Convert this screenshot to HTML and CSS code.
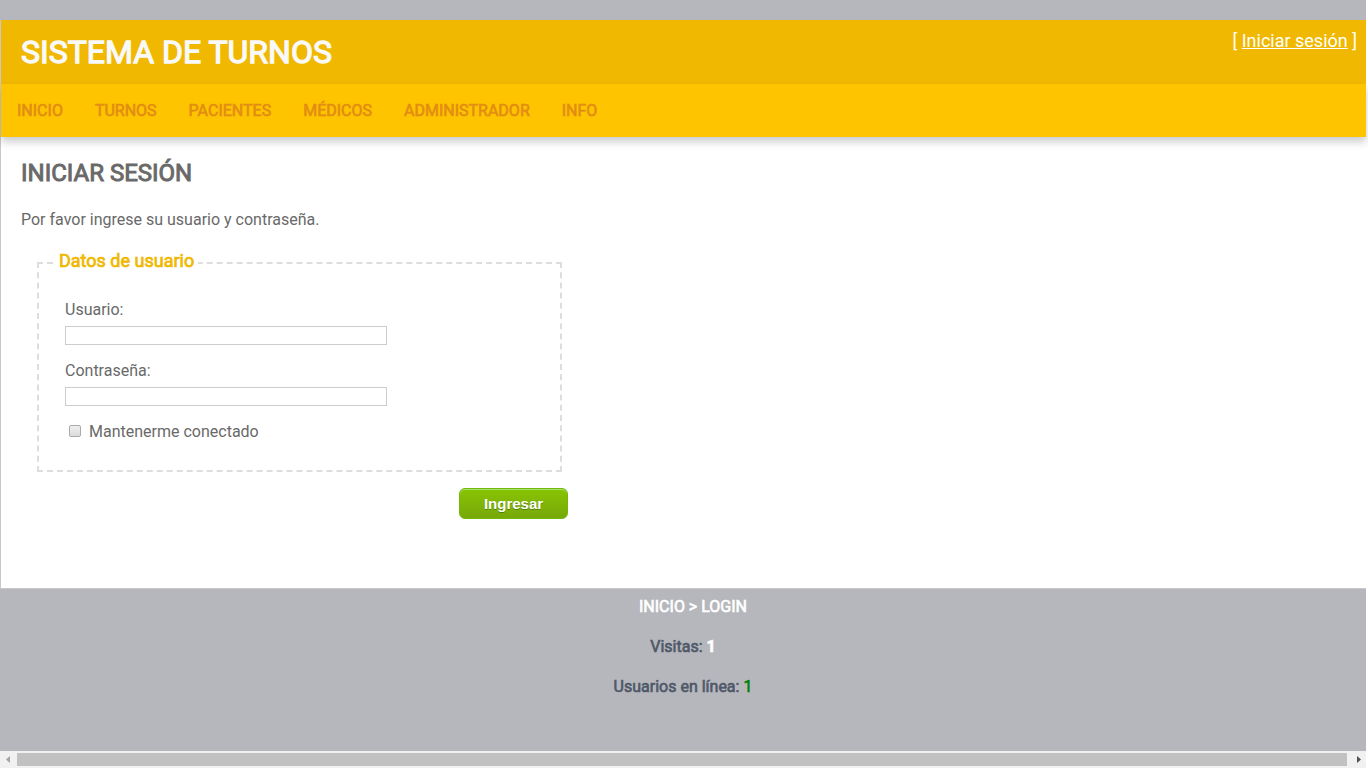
FILE: index.html
```html
<!DOCTYPE html>
<html lang="es">
<head>
<meta charset="utf-8">
<title>Iniciar sesión</title>
<link rel="stylesheet" href="styles.css">
</head>
<body>
<div class="page">
  <header class="header">
    <h1 class="title">SISTEMA DE TURNOS</h1>
    <div class="login-display">[ <a href="#">Iniciar sesión</a> ]</div>
  </header>
  <nav class="menu">
    <a href="#">INICIO</a>
    <a href="#">TURNOS</a>
    <a href="#">PACIENTES</a>
    <a href="#">MÉDICOS</a>
    <a href="#">ADMINISTRADOR</a>
    <a href="#">INFO</a>
  </nav>
  <main class="main">
    <h2 class="heading">INICIAR SESIÓN</h2>
    <p class="intro">Por favor ingrese su usuario y contraseña.</p>
    <form class="account">
      <fieldset class="login">
        <legend>Datos de usuario</legend>
        <label class="field-label" for="user">Usuario:</label>
        <input class="text-entry" id="user" type="text">
        <label class="field-label" for="password">Contraseña:</label>
        <input class="text-entry" id="password" type="password">
        <div class="remember">
          <input class="check" id="remember" type="checkbox">
          <label for="remember">Mantenerme conectado</label>
        </div>
      </fieldset>
      <div class="actions"><button class="submit" type="submit">Ingresar</button></div>
    </form>
  </main>
</div>
<footer class="footer">
  <p class="path">INICIO &gt; LOGIN</p>
  <p>Visitas: <span class="visits">1</span></p>
  <p>Usuarios en línea: <span class="online">1</span></p>
</footer>
<div class="scrollbar">
  <svg class="arrow" viewBox="0 0 17 17"><path d="M10 5v7L6 8.500z" fill="#a3a3a3"/></svg>
  <div class="thumb"></div>
  <svg class="arrow" viewBox="0 0 17 17"><path d="M8 5v7l4-3.500z" fill="#505050"/></svg>
</div>
</body>
</html>
```
FILE: styles.css
```css
* { box-sizing: border-box; }

html { background: #fff; }

body {
  display: flex;
  flex-direction: column;
  min-height: 100vh;
  margin: 0;
  padding: 0 2px 4px 0;
  background: linear-gradient(#b6b7bc, #b6b7bc) content-box #fff;
  color: #696969;
  font: 16px/20px Roboto, sans-serif;
}

.page {
  margin-top: 20px;
  border: 1px solid #c8c8c8;
  border-width: 0 0 1px 1px;
  background: #fff;
}

.header {
  display: flex;
  justify-content: space-between;
  align-items: flex-start;
  padding: 9px 9px 9px 20px;
  background: #f0b800;
}

.title,
.heading,
.menu,
.login legend,
.footer {
  font-weight: 400;
  -webkit-text-stroke: 0.04em;
}

.title {
  margin: 0;
  color: #f9f9f9;
  font-size: 32px;
  line-height: 46px;
}

.login-display {
  color: #fff;
  font-size: 18px;
  line-height: 24px;
}

.login-display a { color: #fff; }

.menu {
  display: flex;
  position: relative;
  background: #ffc400;
  box-shadow: 0 5px 8px rgba(0, 0, 0, 0.2);
}

.menu a {
  padding: 17px 16px 16px;
  color: #e38d13;
  text-decoration: none;
}

.main { padding: 20px 20px 69px; }

.heading {
  margin: 0;
  font-size: 24px;
  line-height: 32px;
}

.intro { margin: 21px 0 19px; }

.account { width: 547px; }

.login {
  margin: 0 6px 16px 16px;
  padding: 23px 26px 28px 16px;
  border: 2px dashed #ddd;
}

.login legend {
  padding: 0 4px 4px;
  color: #f0b800;
  font-size: 18px;
  line-height: 24px;
}

.field-label {
  display: block;
  margin-left: 10px;
}

.text-entry {
  display: block;
  width: 322px;
  height: 19px;
  margin: 6px 0 16px 10px;
  padding: 1px 2px;
  border: 1px solid #ccc;
  background: #fff;
}

.remember {
  display: flex;
  align-items: flex-start;
  gap: 8px;
  margin-left: 14px;
}

.check {
  appearance: none;
  width: 12px;
  height: 12px;
  margin: 3px 0 0;
  border: 1px solid #aaa;
  border-radius: 2px;
  background: linear-gradient(#eee, #dcdcdc);
}

.actions { text-align: right; }

.submit {
  width: 109px;
  height: 31px;
  padding: 0;
  border: 1px solid #74b807;
  border-radius: 6px;
  background: linear-gradient(#89c403, #77a809);
  box-shadow: inset 0 1px 0 #a4e271;
  color: #fff;
  font: bold 15px/20px "Liberation Sans", Arial, sans-serif;
  text-shadow: 0 1px 0 #528009;
}

.footer {
  flex: 1;
  padding-top: 8px;
  color: #4e5869;
  text-align: center;
}

.footer p { margin: 0 0 20px; }

.footer .path {
  padding-left: 20px;
  color: #fff;
}

.visits {
  color: #fff;
  font-weight: 700;
}

.online { color: green; }

.scrollbar {
  display: flex;
  height: 17px;
  background: #f1f1f1;
}

.arrow {
  width: 17px;
  height: 17px;
}

.thumb {
  flex: 1;
  margin: 2px 2px 2px 0;
  background: #c1c1c1;
}
```
